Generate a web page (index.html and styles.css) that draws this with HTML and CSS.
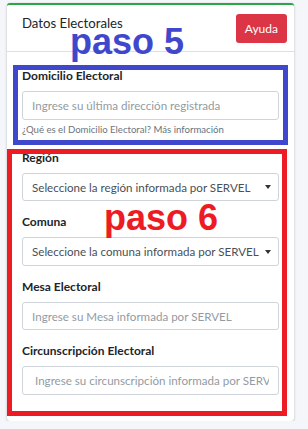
FILE: index.html
```html
<!DOCTYPE html>
<html lang="es">
<head>
    <meta charset="UTF-8">
    <meta name="viewport" content="width=device-width, initial-scale=1.0">
    <title>Datos Electorales</title>
    <link rel="stylesheet" href="styles.css">
</head>
<body>
    <div class="card">
        <div class="card-header">
            <h3 class="card-title">Datos Electorales</h3>
            <button class="btn-help" type="button">Ayuda</button>
        </div>
        <div class="card-body">
            <div class="form-group">
                <label for="domicilio">Domicilio Electoral</label>
                <input type="text" id="domicilio" placeholder="Ingrese su última dirección registrada">
                <small class="help">¿Qué es el Domicilio Electoral? <a href="#">Más información</a></small>
            </div>
            <div class="form-group">
                <label for="region">Región</label>
                <select id="region">
                    <option>Seleccione la región informada por SERVEL</option>
                </select>
            </div>
            <div class="form-group">
                <label for="comuna">Comuna</label>
                <select id="comuna">
                    <option>Seleccione la comuna informada por SERVEL</option>
                </select>
            </div>
            <div class="form-group">
                <label for="mesa">Mesa Electoral</label>
                <input type="text" id="mesa" placeholder="Ingrese su Mesa informada por SERVEL">
            </div>
            <div class="form-group">
                <label for="circ">Circunscripción Electoral</label>
                <input type="text" id="circ" placeholder=" Ingrese su circunscripción informada por SERVEL">
            </div>
        </div>

        <!-- step annotations drawn over the form -->
        <div class="step-box step-5"></div>
        <div class="step-box step-6"></div>
        <span class="step-label step-5-label">paso 5</span>
        <span class="step-label step-6-label">paso 6</span>
    </div>
</body>
</html>
```

FILE: styles.css
```css
* {
    margin: 0;
    padding: 0;
    box-sizing: border-box;
}

body {
    background-color: #f4f6f9;
    color: #212529;
    font-family: 'Lato', 'Open Sans', sans-serif;
    padding: 3px 14px 0 7px;
}

.card {
    position: relative;
    width: 287px;
    background: white;
    border-top: 2px solid #28a745;
    border-radius: 3px;
    box-shadow: 0 0 1px rgba(0, 0, 0, 0.125), 0 1px 3px rgba(0, 0, 0, 0.2);
}

.card-header {
    display: flex;
    justify-content: space-between;
    align-items: flex-start;
    padding: 9px 7px 8px 15px;
    border-bottom: 1px solid rgba(0, 0, 0, 0.125);
}

.card-title {
    font-size: 13.2px;
    font-weight: 400;
    line-height: 18px;
    color: #212529;
}

.btn-help {
    background-color: #dc3545;
    color: white;
    border: none;
    border-radius: 3px;
    height: 29px;
    padding: 0 9px;
    font-family: inherit;
    font-size: 12px;
}

.card-body {
    padding: 15px 15px 14px;
}

.form-group {
    margin-bottom: 12px;
}

.form-group label {
    display: block;
    font-size: 12px;
    font-weight: 700;
    line-height: 18px;
    margin-bottom: 6px;
    color: #212529;
}

.form-group input,
.form-group select {
    display: block;
    width: 100%;
    height: 28.5px;
    padding: 0 9px;
    border: 1px solid #ced4da;
    border-radius: 3px;
    background-color: white;
    font-family: inherit;
    font-size: 11.6px;
    color: #495057;
}

.form-group input::placeholder {
    color: #939ba2;
}

.form-group select {
    appearance: none;
    -webkit-appearance: none;
    padding-right: 16px;
    background-image: url("data:image/svg+xml,%3Csvg xmlns='http://www.w3.org/2000/svg' width='6' height='4'%3E%3Cpath d='M0 0h6L3 4z' fill='%23333'/%3E%3C/svg%3E");
    background-repeat: no-repeat;
    background-position: right 7px center;
    background-size: 6px 4px;
}

.help {
    display: block;
    margin-top: 3px;
    font-size: 9.6px;
    line-height: 14.4px;
    color: #6c757d;
}

.help a {
    color: #5f7480;
    text-decoration: none;
}

.step-box {
    position: absolute;
    border: 5px solid;
    pointer-events: none;
}

.step-5 {
    left: 6px;
    top: 60px;
    width: 275px;
    height: 80px;
    border-color: #3f48cc;
}

.step-6 {
    left: 0;
    top: 144px;
    width: 280px;
    height: 267px;
    border-color: #ed1c24;
}

.step-label {
    position: absolute;
    font-family: 'Liberation Sans', Arial, sans-serif;
    font-size: 36px;
    font-weight: 700;
    line-height: 36px;
}

.step-5-label {
    left: 63px;
    top: 19px;
    color: #3f48cc;
}

.step-6-label {
    left: 97px;
    top: 195px;
    color: #ed1c24;
}
```
